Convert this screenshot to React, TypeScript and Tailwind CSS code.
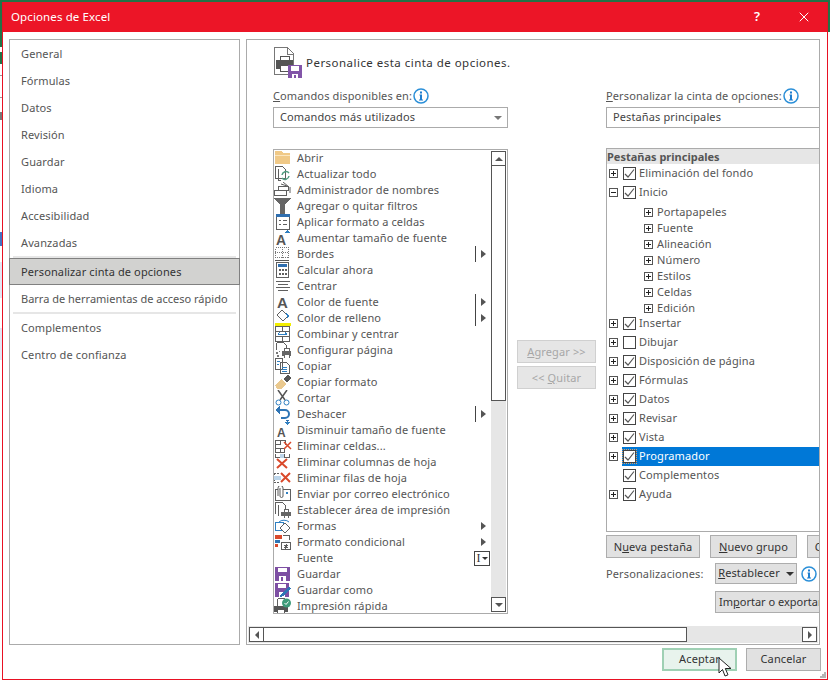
import type { ReactNode } from 'react';
import { X } from 'lucide-react';

const G = '#5f5f5f';
const B = '#2f7fc1';
const R = '#d9492b';
const P = '#7d4fa3';

function Ic({ children }: { children: ReactNode }) {
  return (
    <svg width="18" height="16" viewBox="0 0 18 16" fill="none" className="shrink-0" shapeRendering="crispEdges">
      {children}
    </svg>
  );
}

const icons: Record<string, ReactNode> = {
  folder: <Ic><path d="M1 4V1h6l2 2h7v11H1z" fill="#f0c987" /><path d="M1 5h15" stroke="#fbe6bf" /></Ic>,
  refresh: <Ic><path d="M1.500.5h7l3 3v9h-10z M4 3v11.500h3" stroke={G} /><path d="M8 9a4 4 0 0 1 7-2M15 10a4 4 0 0 1-7 2" stroke="#4f9d80" strokeWidth="1.500" shapeRendering="auto" /></Ic>,
  names: <Ic><path d="M4.500 4.500h10v4h-10zM.5 8.500h12v5H.5z" stroke={G} fill="#fff" /><path d="M7 2l6 2M9 0l6 5M16 5v6" stroke={G} shapeRendering="auto" /></Ic>,
  filter: <Ic><path d="M0 0h17L11 7v9H6V7z" fill="#666" /></Ic>,
  format: <Ic><rect x="2.500" y="0.500" width="13" height="15" stroke={G} /><path d="M2 0h14v3H2z" fill="#2f6fb0" /><path d="M5 6h2M5 10h2M9 6h4M9 10h4" stroke={G} /></Ic>,
  growA: <Ic><text x="2" y="15" fontSize="14" fontFamily="Liberation Sans" fontWeight="700" fill="#555">A</text><path d="M11 3l2.500-3 2.500 3z" fill={B} /></Ic>,
  borders: <Ic><path d="M1.500 1.500h13v10h-13zM8 1v11M1 6.500h14" stroke="#777" strokeDasharray="1 1" /><path d="M1 14.500h14" stroke="#555" /></Ic>,
  calc: <Ic><rect x="2.500" y=".5" width="12" height="15" stroke={G} /><path d="M4 2h9v3H4z" fill="#2f6fb0" /><path d="M5 7h2v2H5zM8 7h2v2H8zM11 7h2v2h-2zM5 11h2v2H5zM8 11h2v2H8zM11 11h2v2h-2z" fill={G} /></Ic>,
  center: <Ic><path d="M2 3.500h14M4 6.500h10M2 9.500h14M4 12.500h10" stroke={G} /></Ic>,
  colorA: <Ic><text x="3" y="14" fontSize="15" fontFamily="Liberation Sans" fontWeight="700" fill="#555">A</text></Ic>,
  fill: <Ic><path d="M8 0l6 6-5 5-6-6z" stroke={G} shapeRendering="auto" /><path d="M12 3l3 3-1 3z" fill={B} /><path d="M1 13h16v3H1z" fill="#f2ee00" /></Ic>,
  merge: <Ic><path d="M1.500.5h14v15h-14zM1 5.500h15M1 10.500h15M8.500 0v5M8.500 11v5" stroke={G} /><path d="M4 8h9M4 8l2-1.500M13 8l-2-1.500" stroke={B} /></Ic>,
  page: <Ic><path d="M2.500.5h7l3 3v5M2.500.5v7" stroke={G} /><path d="M8 9h9v5H8z" fill="#666" /><path d="M10 6h5v3h-5zM10 12h5v4h-5z" fill="#fff" stroke="#666" /><path d="M2 10h2v2H2zM5 9h1v1H5zM3 13h2v2H3z" fill="#777" /></Ic>,
  copy: <Ic><path d="M1.500.5h7v11h-7zM6.500 4.500h6l3 3v8h-9z" stroke={G} fill="#fff" /><path d="M3 3h3M3 6h2M8 9h5M8 11h5M8 13h5" stroke={B} /></Ic>,
  brush: <Ic><path d="M1 11l6-6 5 5-5 5H3z" fill="#eac98f" /><path d="M9 5l5-4 3 3-4 5z" fill="#555" /></Ic>,
  cut: <Ic><path d="M4 0l7 10M13 0L6 10" stroke="#555" strokeWidth="1.500" shapeRendering="auto" /><circle cx="4.500" cy="12.500" r="2.500" stroke={B} shapeRendering="auto" /><circle cx="12.500" cy="12.500" r="2.500" stroke={B} shapeRendering="auto" /></Ic>,
  undo: <Ic><path d="M3 4h8a4 4 0 0 1 0 8H7" stroke="#2f75b5" strokeWidth="2" shapeRendering="auto" /><path d="M6 0L1 4l5 4z" fill="#2f75b5" /><path d="M11 14h5l-2.500 2z" fill="#2f6fb0" /></Ic>,
  shrinkA: <Ic><text x="3" y="15" fontSize="12" fontFamily="Liberation Sans" fontWeight="700" fill="#555">A</text><path d="M10 0h6l-3 3z" fill={B} /></Ic>,
  delCell: <Ic><path d="M1.500 2.500h5v4h-5zM6.500 2.500h5v4M1.500 6.500v8h5v-4h-5M6.500 10.500h4v4h-4" stroke={G} /><path d="M10 4l7 7M17 4l-7 7" stroke={R} strokeWidth="1.500" shapeRendering="auto" /></Ic>,
  delCol: <Ic><path d="M1.500 0v3h5V0M10.500 0v3h5V0" stroke={G} /><path d="M6 0h4v4H6z" fill="#bcd5ea" /><path d="M3 5l10 9M13 5L3 14" stroke={R} strokeWidth="2" shapeRendering="auto" /></Ic>,
  delRow: <Ic><path d="M0 3.500h5M0 12.500h5M0 3v10" stroke={G} strokeDasharray="2 1" /><path d="M0 6h7v4H0z" fill="#bcd5ea" /><path d="M7 3l9 9M16 3l-9 9" stroke={R} strokeWidth="2" shapeRendering="auto" /></Ic>,
  mail: <Ic><path d="M1.500 3.500h15v11h-15z" stroke={G} /><path d="M6 2v8a1.500 1.500 0 0 0 3 0V2a2.500 2.500 0 0 0-5 0v8" stroke={G} shapeRendering="auto" fill="#fff" /><path d="M12 6h2v2h-2z" fill={B} /></Ic>,
  area: <Ic><path d="M1.500 12V.5h7l3 3v3M4.500 14V3" stroke={G} /><path d="M7 10h10v4H7z" fill="#666" /><path d="M10 7h4v3h-4zM10 13h4v3h-4z" fill="#fff" stroke="#666" /></Ic>,
  shapes: <Ic><path d="M1.500 4.500h8v8h-8z" stroke={B} /><path d="M11 5l5 5-5 5-5-5z" fill="#fff" stroke={G} shapeRendering="auto" /><path d="M5 4a6 4 0 0 1 10 0" stroke={B} shapeRendering="auto" /></Ic>,
  cond: <Ic><path d="M1 1h7v4H1z" fill={R} /><path d="M1 6h5v3H1z" fill="#2f75b5" /><path d="M1 10h3v3H1z" fill={R} /><path d="M8.500 1.500h7v4M7.500 8.500h9v7h-9z" stroke={G} fill="#fff" /><path d="M10 11h4M10 13h4M13 10l-2 5" stroke={G} /></Ic>,
  save: <Ic><path d="M1 1h15v14H1z" fill={P} /><path d="M4 2h9v4H4zM5 10h7v5H5z" fill="#fff" /><path d="M7 11h2v4H7z" fill={P} /></Ic>,
  saveAs: <Ic><path d="M1 1h14v14H1z" fill={P} /><path d="M4 2h8v4H4zM5 10h6v5H5z" fill="#fff" /><path d="M6 15l1-3 8-7 2 2-8 7z" fill="#2f75b5" /></Ic>,
  quick: <Ic><path d="M3.500.5h7M3.500.5v7" stroke={G} /><path d="M0 8h14v6H0z" fill="#555" /><path d="M3 11h7v5H3z" fill="#fff" stroke="#555" /><circle cx="12.500" cy="5" r="4.500" fill="#3f9b7a" shapeRendering="auto" /><path d="M10.500 5l1.500 1.500 2.500-3" stroke="#fff" shapeRendering="auto" /></Ic>,
};

type Cmd = { label: string; icon?: string; sub?: 'bar' | 'plain' | 'box' };

const commands: Cmd[] = [
  { label: 'Abrir', icon: 'folder' },
  { label: 'Actualizar todo', icon: 'refresh' },
  { label: 'Administrador de nombres', icon: 'names' },
  { label: 'Agregar o quitar filtros', icon: 'filter' },
  { label: 'Aplicar formato a celdas', icon: 'format' },
  { label: 'Aumentar tamaño de fuente', icon: 'growA' },
  { label: 'Bordes', icon: 'borders', sub: 'bar' },
  { label: 'Calcular ahora', icon: 'calc' },
  { label: 'Centrar', icon: 'center' },
  { label: 'Color de fuente', icon: 'colorA', sub: 'bar' },
  { label: 'Color de relleno', icon: 'fill', sub: 'bar' },
  { label: 'Combinar y centrar', icon: 'merge' },
  { label: 'Configurar página', icon: 'page' },
  { label: 'Copiar', icon: 'copy' },
  { label: 'Copiar formato', icon: 'brush' },
  { label: 'Cortar', icon: 'cut' },
  { label: 'Deshacer', icon: 'undo', sub: 'bar' },
  { label: 'Disminuir tamaño de fuente', icon: 'shrinkA' },
  { label: 'Eliminar celdas...', icon: 'delCell' },
  { label: 'Eliminar columnas de hoja', icon: 'delCol' },
  { label: 'Eliminar filas de hoja', icon: 'delRow' },
  { label: 'Enviar por correo electrónico', icon: 'mail' },
  { label: 'Establecer área de impresión', icon: 'area' },
  { label: 'Formas', icon: 'shapes', sub: 'plain' },
  { label: 'Formato condicional', icon: 'cond', sub: 'plain' },
  { label: 'Fuente', sub: 'box' },
  { label: 'Guardar', icon: 'save' },
  { label: 'Guardar como', icon: 'saveAs' },
  { label: 'Impresión rápida', icon: 'quick' },
];

const navTop = ['General', 'Fórmulas', 'Datos', 'Revisión', 'Guardar', 'Idioma', 'Accesibilidad', 'Avanzadas'];

const groups = ['Portapapeles', 'Fuente', 'Alineación', 'Número', 'Estilos', 'Celdas', 'Edición'];

function NavItem({ label }: { label: string }) {
  return <div className="h-[27px] pl-[11px] pt-[2px] flex items-center">{label}</div>;
}

function Info() {
  return (
    <svg width="16" height="16" viewBox="0 0 16 16" className="shrink-0">
      <circle cx="8" cy="8" r="7" fill="#fff" stroke="#2b8fd8" strokeWidth="1.500" />
      <path d="M7 3.500h2v2H7zM6.500 6.500H9v5h1v1H6v-1h1v-4h-.5z" fill="#1f7fd0" />
    </svg>
  );
}

function Caret({ dark }: { dark?: boolean }) {
  return <span className={`block w-0 h-0 border-x-[4px] border-x-transparent border-t-[4px] ${dark ? 'border-t-[#333]' : 'border-t-[#777]'}`} />;
}

function SubArrow() {
  return <span className="w-0 h-0 border-y-[4px] border-y-transparent border-l-[5px] border-l-[#555]" />;
}

function CommandRow({ cmd }: { cmd: Cmd }) {
  return (
    <div className="h-4 flex items-center whitespace-nowrap">
      <div className="w-[23px] shrink-0">{cmd.icon && icons[cmd.icon]}</div>
      <span>{cmd.label}</span>
      {cmd.sub === 'bar' && (
        <span className="ml-auto mr-[5px] w-[11px] h-4 border-l border-[#444] flex items-center justify-end">
          <SubArrow />
        </span>
      )}
      {cmd.sub === 'plain' && (
        <span className="ml-auto mr-[5px] flex items-center">
          <SubArrow />
        </span>
      )}
      {cmd.sub === 'box' && (
        <span className="ml-auto mr-px w-[16px] h-[15px] border border-[#444] flex items-center justify-center gap-[1px] text-[#333] font-['Liberation_Serif'] text-[12px] leading-none">
          I<span className="w-0 h-0 border-x-[3px] border-x-transparent border-t-[3px] border-t-[#333]" />
        </span>
      )}
    </div>
  );
}

function Expander({ open }: { open?: boolean }) {
  return (
    <span className="w-[9px] h-[9px] border border-[#555] relative shrink-0 bg-white">
      <span className="absolute left-[1px] top-[3px] w-[5px] h-px bg-[#222]" />
      {!open && <span className="absolute left-[3px] top-[1px] w-px h-[5px] bg-[#222]" />}
    </span>
  );
}

function Check({ on = true, focus }: { on?: boolean; focus?: boolean }) {
  return (
    <span className={`w-[13px] h-[13px] border border-[#444] bg-white shrink-0 flex items-center justify-center ${focus ? 'outline-1 outline-dotted outline-[#e0a060]' : ''}`}>
      {on && (
        <svg width="11" height="11" viewBox="0 0 11 11" fill="none">
          <path d="M1 6l3 3 6-7.500" stroke="#555" strokeWidth="1.200" />
        </svg>
      )}
    </span>
  );
}

function TabRow({ label, checked = true, open, noExpander, selected }: { label: string; checked?: boolean; open?: boolean; noExpander?: boolean; selected?: boolean }) {
  return (
    <div className="h-[19px] flex items-center pl-[2px] whitespace-nowrap">
      <span className="w-[9px] mr-[4px] shrink-0 flex">{!noExpander && <Expander open={open} />}</span>
      <div className={`flex-1 h-[19px] flex items-center pl-px gap-[3px] ${selected ? 'bg-[#0078d7] text-white' : ''}`}>
        <Check on={checked} focus={selected} />
        <span>{label}</span>
      </div>
    </div>
  );
}

function Btn({ children, className = '' }: { children: ReactNode; className?: string }) {
  return (
    <div className={`h-[23px] shrink-0 border border-[#adadad] bg-[#e1e1e1] text-[#333] flex items-center justify-center whitespace-nowrap ${className}`}>
      {children}
    </div>
  );
}

function SmallScrollBtn({ children, className = '' }: { children: ReactNode; className?: string }) {
  return <div className={`shrink-0 border border-[#555] bg-white flex items-center justify-center ${className}`}>{children}</div>;
}

export default function App() {
  return (
    <div className="relative w-[830px] h-[680px] overflow-hidden bg-white pt-[2px] pl-[2px] pr-[2px] font-['Noto_Sans',sans-serif] text-[11px] tracking-[0.12px] text-[#555]">
      {/* bits of the sheet behind the dialog */}
      <div className="absolute inset-x-0 top-0 h-[2px] bg-[#217346]" />
      <div className="absolute left-0 top-0 w-[2px] h-[47px] bg-[#217346]" />
      <div className="absolute left-0 top-[52px] w-[2px] h-[12px] bg-[#217346]" />
      <div className="absolute left-0 top-[75px] w-[2px] h-px bg-[#999]" />
      <div className="absolute left-0 top-[97px] w-[2px] h-px bg-[#999]" />
      <div className="absolute left-0 top-[112px] w-[2px] h-[8px] bg-[#777]" />
      <div className="absolute left-0 top-[232px] w-[2px] h-[14px] bg-[#4472c4]" />
      <div className="absolute left-0 top-[262px] w-[2px] h-[36px] bg-[#e3e6f4]" />
      <div className="absolute left-0 top-[328px] w-[2px] h-[32px] bg-[#e3e6f4]" />
      <div className="absolute right-0 top-0 w-[2px] h-[32px] bg-[#217346]" />

      <div className="w-[826px] h-[678px] border border-[#e81123] border-t-0 flex flex-col bg-white relative">
        <div className="h-[30px] shrink-0 bg-[#ec1527] text-white flex items-center pl-[8px]">
          <span className="text-[11.500px]">Opciones de Excel</span>
          <span className="ml-auto mr-[36px] text-[13px] font-semibold">?</span>
          <X size={16} strokeWidth={1.500} className="mr-[15px]" />
        </div>

        <div className="flex-1 min-h-0 flex gap-[6px] pl-[6px] pr-[6px] pt-[7px]">
          {/* left nav */}
          <div className="w-[231px] h-[606px] shrink-0 border border-[#ababab]">
            {navTop.map((n) => <NavItem key={n} label={n} />)}
            <div className="h-[2px] mx-[3px] bg-[#e6e6e6]" />
            <div className="h-[27px] -mx-px bg-[#d2d2d0] border border-[#808080] pl-[11px] pt-[2px] flex items-center text-[#333]">Personalizar cinta de opciones</div>
            <div className="h-[27px] pl-[11px] pt-[2px] flex items-center whitespace-nowrap tracking-normal">Barra de herramientas de acceso rápido</div>
            <div className="h-[2px] mx-[3px] bg-[#e6e6e6]" />
            <NavItem label="Complementos" />
            <NavItem label="Centro de confianza" />
          </div>

          {/* right panel */}
          <div className="w-[574px] h-[606px] shrink-0 border border-[#ababab] flex flex-col overflow-hidden">
            <div className="flex-1 min-h-0 overflow-hidden pl-[26px]">
              <div className="h-[38px] pt-[5px] flex items-center gap-[3px] text-[#333]">
                <svg width="30" height="32" viewBox="0 0 30 32" fill="none" className="shrink-0" shapeRendering="crispEdges">
                  <path d="M1.500 1.500h13l6 6v21h-19z" stroke="#777" />
                  <path d="M14.500 1v7h6" stroke="#777" />
                  <path d="M3 14h17v9H3z" fill="#555" />
                  <path d="M7.500 10.500h9v4h-9zM7.500 19.500h9v6h-9z" fill="#fff" stroke="#555" />
                  <path d="M15 19h14v13H15z" fill="#8255a8" />
                  <path d="M18 20h8v5h-8zM19 28h6v4h-6z" fill="#fff" />
                  <path d="M21 29h2v3h-2z" fill="#8255a8" />
                </svg>
                <span className="mt-[2px] text-[11.500px] tracking-[0.47px]">Personalice esta cinta de opciones.</span>
              </div>

              <div className="flex w-[600px] mt-[9px]">
                {/* commands */}
                <div className="w-[235px] shrink-0">
                  <div className="h-[17px] flex items-center gap-[1px]">
                    <span className="mt-[2px]"><span className="underline">C</span>omandos disponibles en:</span>
                    <Info />
                  </div>
                  <div className="mt-[3px] h-[21px] border border-[#ababab] pl-[6px] pr-[3px] flex items-center justify-between text-[#444]">
                    Comandos más utilizados
                    <span className="mr-[2px]"><Caret /></span>
                  </div>
                  <div className="mt-[21px] h-[465px] border border-[#ababab] flex overflow-hidden">
                    <div className="flex-1 min-w-0">
                      {commands.map((c) => <CommandRow key={c.label} cmd={c} />)}
                    </div>
                    <div className="w-[15px] shrink-0 mr-px mt-px mb-px flex flex-col bg-[#e6e6e6]">
                      <SmallScrollBtn className="h-[15px]"><span className="w-0 h-0 border-x-[4px] border-x-transparent border-b-[4px] border-b-[#555]" /></SmallScrollBtn>
                      <div className="h-[235px] border border-t-0 border-[#555] bg-white" />
                      <div className="flex-1" />
                      <SmallScrollBtn className="h-[15px]"><span className="w-0 h-0 border-x-[4px] border-x-transparent border-t-[4px] border-t-[#555]" /></SmallScrollBtn>
                    </div>
                  </div>
                </div>

                {/* add / remove */}
                <div className="w-[98px] shrink-0 pl-[9px] pt-[253px] text-[#a6a6a6]">
                  <div className="w-[79px] h-[23px] pt-px border border-[#d0d0d0] bg-[#e6e6e6] flex items-center justify-center">
                    <span><span className="underline">A</span>gregar &gt;&gt;</span>
                  </div>
                  <div className="w-[79px] h-[23px] pt-px mt-[3px] border border-[#d0d0d0] bg-[#e6e6e6] flex items-center justify-center">
                    <span>&lt;&lt; <span className="underline">Q</span>uitar</span>
                  </div>
                </div>

                {/* ribbon tabs */}
                <div className="w-[267px] shrink-0">
                  <div className="h-[17px] flex items-center gap-[1px] whitespace-nowrap">
                    <span className="mt-[2px]"><span className="underline">P</span>ersonalizar la cinta de opciones:</span>
                    <Info />
                  </div>
                  <div className="mt-[3px] h-[21px] border border-[#ababab] pl-[6px] flex items-center text-[#444]">Pestañas principales</div>
                  <div className="mt-[20px] h-[384px] border border-[#ababab] overflow-hidden">
                    <div className="h-[15px] bg-[#e6e6e6] font-bold leading-[15px] tracking-normal text-[#555]">Pestañas principales</div>
                    <TabRow label="Eliminación del fondo" />
                    <TabRow label="Inicio" open />
                    <div className="pt-[2px] -mb-[2px]">
                      {groups.map((g) => (
                        <div key={g} className="h-4 flex items-center pl-[37px] gap-[4px]">
                          <Expander />
                          <span>{g}</span>
                        </div>
                      ))}
                    </div>
                    <TabRow label="Insertar" />
                    <TabRow label="Dibujar" checked={false} />
                    <TabRow label="Disposición de página" />
                    <TabRow label="Fórmulas" />
                    <TabRow label="Datos" />
                    <TabRow label="Revisar" />
                    <TabRow label="Vista" />
                    <TabRow label="Programador" selected />
                    <TabRow label="Complementos" noExpander />
                    <TabRow label="Ayuda" />
                  </div>
                  <div className="mt-[3px] flex gap-[10px]">
                    <Btn className="w-[94px] pt-px"><span>N<span className="underline">u</span>eva pestaña</span></Btn>
                    <Btn className="w-[87px] pt-px"><span><span className="underline">N</span>uevo grupo</span></Btn>
                    <Btn className="w-[105px] pt-px">Cambiar nombre</Btn>
                  </div>
                  <div className="mt-[5px] flex items-center h-[21px]">
                    <span className="w-[109px] mt-[2px]">Personalizaciones:</span>
                    <Btn className="!h-[21px] w-[82px] gap-[6px]">
                      <span><span className="underline">R</span>establecer</span>
                      <Caret dark />
                    </Btn>
                    <span className="ml-[4px]"><Info /></span>
                  </div>
                  <Btn className="mt-[7px] ml-[109px] !h-[22px] w-[140px] !justify-start pl-[3px] tracking-normal">
                    <span>Im<span className="underline">p</span>ortar o exportar</span>
                  </Btn>
                </div>
              </div>
            </div>

            {/* horizontal scrollbar */}
            <div className="h-[17px] mb-px mx-px shrink-0 flex items-stretch bg-[#e6e6e6] px-px py-px">
              <SmallScrollBtn className="w-[15px]"><span className="w-0 h-0 border-y-[4px] border-y-transparent border-r-[4px] border-r-[#555]" /></SmallScrollBtn>
              <div className="w-[423px] border border-l-0 border-[#555] bg-white" />
              <div className="flex-1" />
              <SmallScrollBtn className="w-[15px]"><span className="w-0 h-0 border-y-[4px] border-y-transparent border-l-[4px] border-l-[#555]" /></SmallScrollBtn>
            </div>
          </div>
        </div>

        {/* footer */}
        <div className="h-[33px] shrink-0 flex items-start justify-end gap-[9px] pr-[6px] pt-[2px]">
          <div className="w-[75px] h-[23px] border-2 border-[#9fd0b4] bg-[#e8f3ed] text-[#333] flex items-center justify-center">Aceptar</div>
          <div className="w-[75px] h-[23px] border border-[#adadad] bg-[#e1e1e1] text-[#333] flex items-center justify-center">Cancelar</div>
        </div>

        {/* mouse pointer over the OK button */}
        <svg width="14" height="21" viewBox="0 0 14 21" className="absolute left-[715px] top-[655px]">
          <path d="M1 1v15l3.500-3.500 2.500 6.500 3-1.200-2.700-6.300H13z" fill="#fff" stroke="#222" strokeWidth="1" />
        </svg>

        {/* resize grip */}
        <svg width="6" height="6" viewBox="0 0 6 6" className="absolute right-px bottom-px" shapeRendering="crispEdges">
          <path d="M4 0h2v2H4zM2 2h2v2H2zM4 2h2v2H4zM0 4h2v2H0zM2 4h2v2H2zM4 4h2v2H4z" fill="#b5b5b5" />
        </svg>
      </div>
    </div>
  );
}
